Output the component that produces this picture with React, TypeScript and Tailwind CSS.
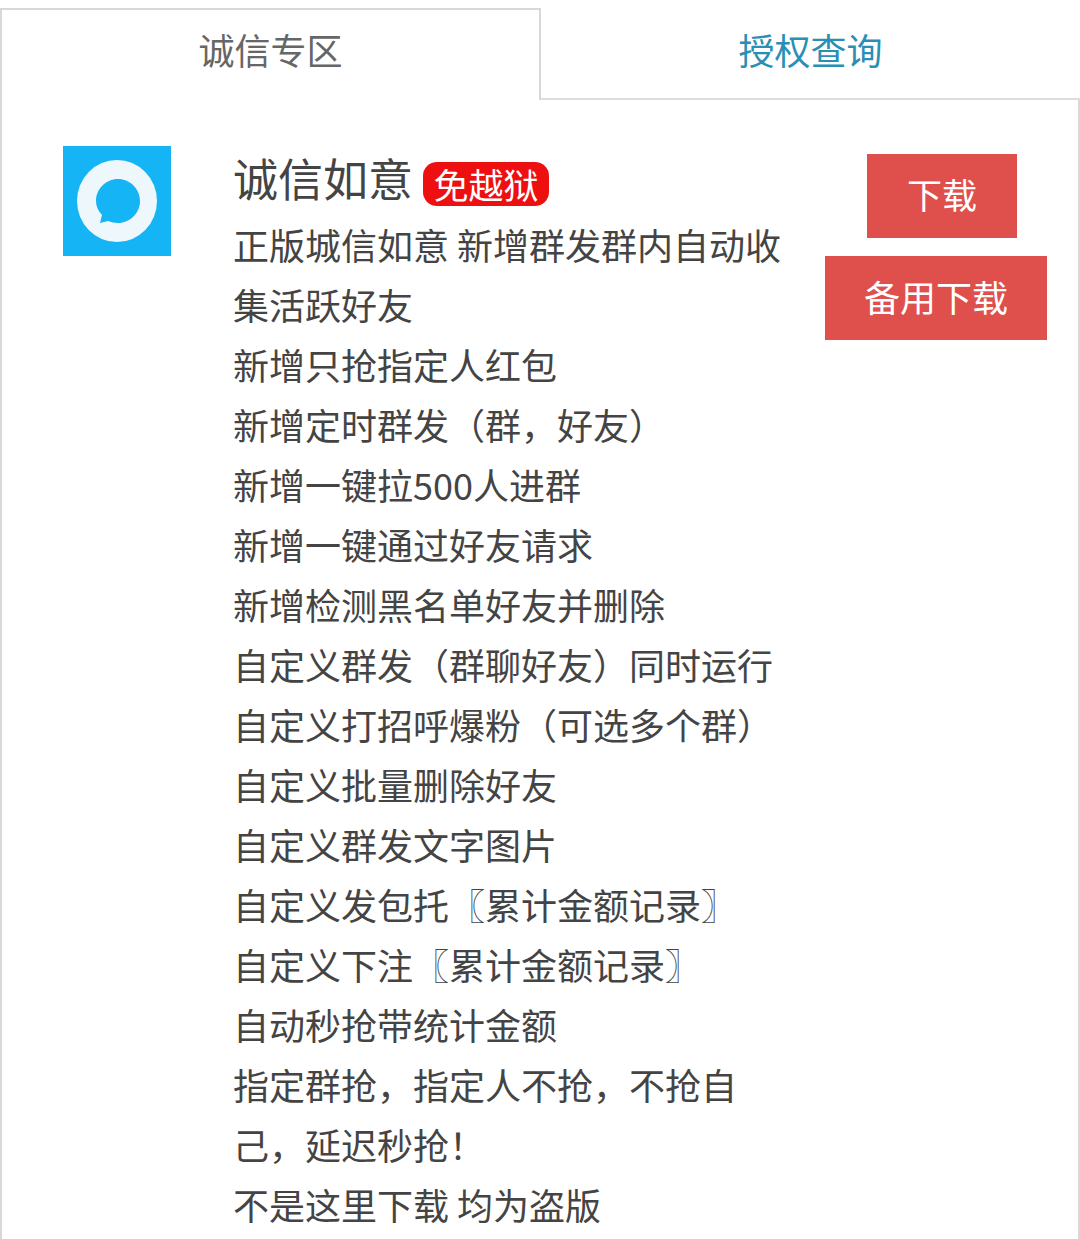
const lines = ["正版城信如意 新增群发群内自动收","集活跃好友","新增只抢指定人红包","新增定时群发（群，好友）","新增一键拉500人进群","新增一键通过好友请求","新增检测黑名单好友并删除","自定义群发（群聊好友）同时运行","自定义打招呼爆粉（可选多个群）","自定义批量删除好友","自定义群发文字图片","自定义发包托〖累计金额记录〗","自定义下注〖累计金额记录〗","自动秒抢带统计金额","指定群抢，指定人不抢，不抢自","己，延迟秒抢！","不是这里下载 均为盗版"];
const font = { fontFamily: '"Noto Sans CJK SC", sans-serif' };
export default function App() {
  return (
    <div className="w-[1080px] h-[1239px] overflow-hidden bg-white" style={font}>
      <div className="flex h-[100px] pt-2">
        <div className="w-[541px] border-t-2 border-l-2 border-r-2 border-[#d8d8d8] flex items-center justify-center text-[36px] text-[#666666] pb-[12px]">诚信专区</div>
        <div className="flex-1 border-b-2 border-[#dddddd] flex items-center justify-center text-[36px] text-[#2a8fb5] pb-[8px]">授权查询</div>
      </div>
      <div className="flex border-l-2 border-r-2 border-[#d8d8d8] h-[1139px] pl-[61px]">
        <div className="w-[108px] h-[110px] mt-[46px] bg-[#14b4f5] flex items-center justify-center shrink-0">
          <svg width="80" height="82" viewBox="0 0 80 82">
            <ellipse cx="40" cy="41" rx="40" ry="41" fill="#eef7fb" />
            <path d="M41 19c12 0 22 10 22 22s-10 22-22 22c-4 0-7-1-10-2l-8 2 2-8c-4-4-6-9-6-14 0-12 10-22 22-22z" fill="#14b4f5" />
          </svg>
        </div>
        <div className="ml-[62px] w-[560px] shrink-0 pt-[47px]">
          <div className="flex items-center h-[62px]">
            <span className="text-[45px] text-[#444444]">诚信如意</span>
            <span className="ml-[10px] w-[126px] h-[44px] rounded-[14px] bg-[#ee1010] text-white text-[35px] flex items-center justify-center mt-[12px]">免越狱</span>
          </div>
          <div className="text-[36px] leading-[60px] text-[#444444] mt-[5px]">
            {lines.map((l) => <div key={l} className="whitespace-nowrap">{l}</div>)}
          </div>
        </div>
        <div className="flex-1 flex flex-col items-end pt-[54px] pr-[31px]">
          <div className="w-[150px] h-[84px] bg-[#df4f4c] text-white text-[35px] flex items-center justify-center mr-[30px] pb-[4px]">下载</div>
          <div className="mt-[18px] w-[222px] h-[84px] bg-[#df4f4c] text-white text-[36px] flex items-center justify-center pb-[4px]">备用下载</div>
        </div>
      </div>
    </div>
  );
}
